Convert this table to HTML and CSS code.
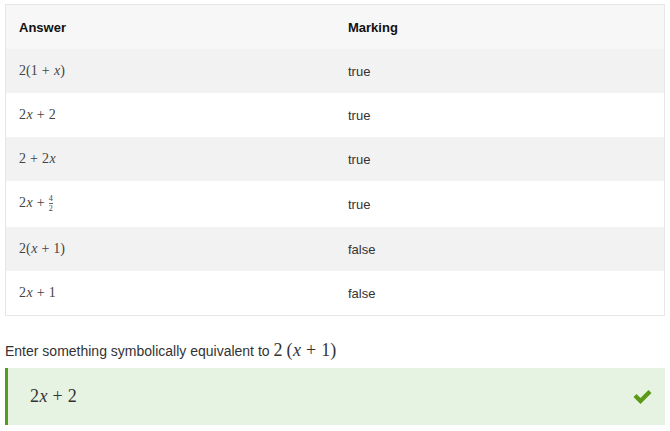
FILE: index.html
```html
<!DOCTYPE html>
<html lang="en">
<head>
    <meta charset="UTF-8">
    <title>Symbolic equivalence</title>
    <link rel="stylesheet" href="styles.css">
</head>
<body>
    <table class="marking">
        <thead>
            <tr>
                <th>Answer</th>
                <th>Marking</th>
            </tr>
        </thead>
        <tbody>
            <tr>
                <td><span class="math">2(1<span class="op">+</span><i>x</i>)</span></td>
                <td>true</td>
            </tr>
            <tr>
                <td><span class="math">2<i>x</i><span class="op">+</span>2</span></td>
                <td>true</td>
            </tr>
            <tr>
                <td><span class="math">2<span class="op">+</span>2<i>x</i></span></td>
                <td>true</td>
            </tr>
            <tr class="tall">
                <td><span class="math">2<i>x</i><span class="op">+</span><span class="frac"><span>4</span><span class="den">2</span></span></span></td>
                <td>true</td>
            </tr>
            <tr>
                <td><span class="math">2(<i>x</i><span class="op">+</span>1)</span></td>
                <td>false</td>
            </tr>
            <tr>
                <td><span class="math">2<i>x</i><span class="op">+</span>1</span></td>
                <td>false</td>
            </tr>
        </tbody>
    </table>

    <p class="prompt">Enter something symbolically equivalent to <span class="math big">2<span class="gap"></span>(<i>x</i><span class="op">+</span>1)</span></p>

    <div class="answer">
        <span class="math input">2<i>x</i><span class="op">+</span>2</span>
        <svg class="tick" width="19" height="15" viewBox="0 0 19 15">
            <path d="M0.5 8 L3.5 5 L7.5 9 L15.5 1 L18.5 4 L7.5 15 Z" fill="#5a9a17"/>
        </svg>
    </div>
</body>
</html>
```

FILE: styles.css
```css
body {
    font-family: 'Liberation Sans', Arial, sans-serif;
    font-size: 13px;
    color: #333;
    margin: 4px 5px;
}
.marking {
    width: 660px;
    border-collapse: collapse;
    border: 1px solid #e6e6e6;
    table-layout: fixed;
}
.marking th,
.marking td {
    text-align: left;
    padding: 0 13px;
    height: 44px;
}
.marking th {
    height: 44px;
    background-color: #f7f7f7;
    color: #111;
    font-weight: bold;
}
.marking tbody tr:nth-child(odd) td {
    background-color: #f2f2f2;
}
.marking tbody tr:nth-child(even) td {
    background-color: #fff;
}
.marking tr.tall td {
    height: 46px;
}
.math {
    font-family: 'Liberation Serif', 'Times New Roman', serif;
    font-size: 14px;
    color: #444;
}
.math i {
    font-style: italic;
    margin-left: 0.5px;
}
.math .op {
    display: inline-block;
    margin: 0 4px;
}
.gap {
    display: inline-block;
    width: 4px;
}
.frac {
    display: inline-flex;
    flex-direction: column;
    align-items: center;
    vertical-align: middle;
    font-size: 8px;
    line-height: 8px;
}
.frac .den {
    border-top: 1px solid #666;
    padding-top: 1px;
}
.prompt {
    margin: 25px 0 0;
    font-size: 14px;
    line-height: 18px;
}
.math.big {
    font-size: 18px;
    line-height: 18px;
    color: #333;
}
.math.big .op,
.math.input .op {
    margin: 0 5px;
}
.answer {
    display: flex;
    align-items: center;
    justify-content: space-between;
    margin-top: 8px;
    height: 57px;
    background-color: #e6f2e2;
    border-left: 3px solid #5a9a17;
    padding: 0 13px 0 22px;
}
.math.input {
    font-size: 18px;
    color: #333;
}
.tick {
    display: block;
}
```
